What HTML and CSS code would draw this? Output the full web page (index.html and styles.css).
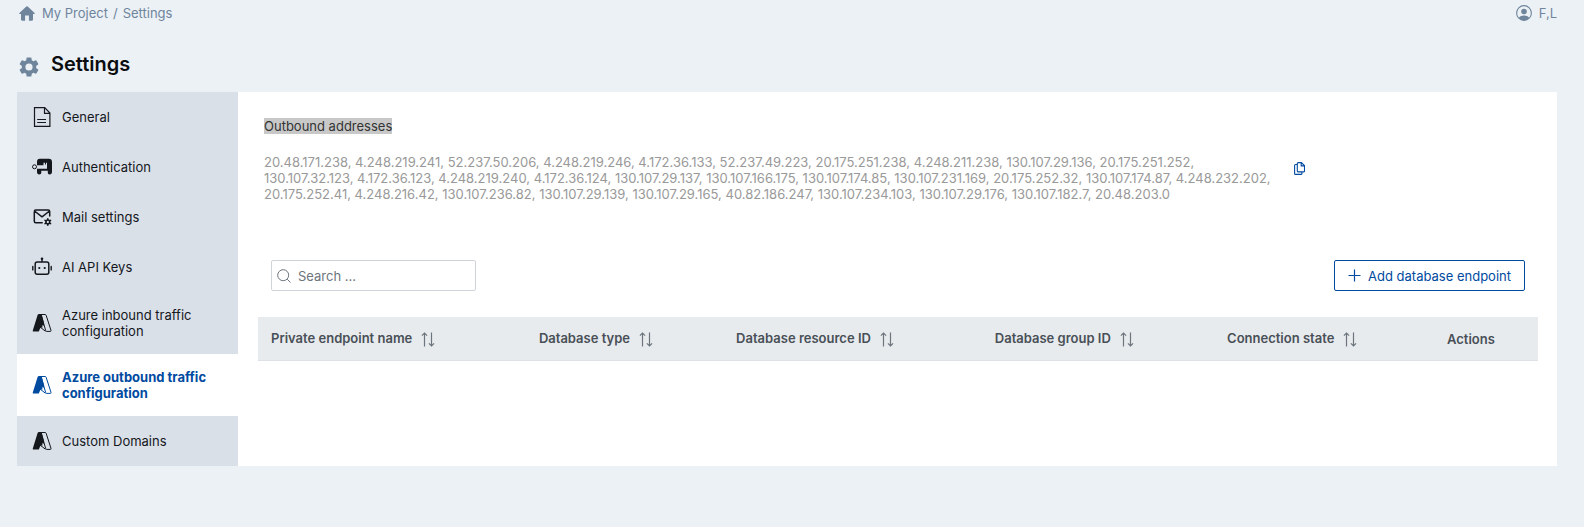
FILE: index.html
```html
<!DOCTYPE html>
<html lang="en">
<head>
  <meta charset="UTF-8" />
  <meta name="viewport" content="width=device-width, initial-scale=1" />
  <title>Settings - My Project</title>
  <link rel="stylesheet" href="styles.css">
</head>
<body>

  <!-- shared icon shapes -->
  <svg class="sprite" aria-hidden="true">
    <symbol id="icon-azure" viewBox="0 0 20 20">
      <path fill="currentColor" d="M6.600 1.300h2.900l2.300 8.200.3 3-2.300.1 1 1.700-2.400.4-1.600 3.800H1.500c-.6 0-.9-.4-.7-1L5.600 2c.2-.5.500-.7 1-.7z"/>
      <path fill="none" stroke="currentColor" stroke-linejoin="round" d="M6.500 1.500h6.600c.5 0 .8.200 1 .7l4.900 15.200c.2.700-.1 1-.7 1h-3.500c-.5 0-.9-.2-1.100-.7L9.200 1.700M6.500 12.800l7 5.500"/>
    </symbol>
    <symbol id="icon-sort" viewBox="0 0 14 15">
      <path fill="none" stroke="currentColor" stroke-width="1.200" d="M3.500 14.500V1.200M.9 3.600l2.600-2.500 2.600 2.500M10.500.5v13.300M7.900 11.400l2.600 2.500 2.600-2.500"/>
    </symbol>
  </svg>

  <header class="topbar">
    <nav class="breadcrumb" aria-label="Breadcrumb">
      <a href="#" aria-label="Home">
        <svg class="icon-home" viewBox="0 0 16 15" aria-hidden="true">
          <path fill="currentColor" d="M7.300.5a1 1 0 0 1 1.400 0l6.900 6.400c.5.500.3 1-.4 1H14v5.600c0 .8-.4 1.200-1.200 1.200H9.900V9.500H6.100v5.200H3.200c-.8 0-1.200-.4-1.200-1.200V7.900H.8c-.7 0-.9-.5-.4-1z"/>
        </svg>
      </a>
      <a href="#">My Project</a>
      <span>/</span>
      <a href="#">Settings</a>
    </nav>
    <button class="user" type="button">
      <svg class="icon-user" viewBox="0 0 16 16" aria-hidden="true">
        <circle cx="8" cy="8" r="7.400" fill="none" stroke="currentColor" stroke-width="1.100"/>
        <circle cx="8" cy="6.500" r="2.800" fill="currentColor"/>
        <path fill="currentColor" d="M2.800 12.900c1.200-1.700 3-2.400 5.200-2.400s4 .7 5.200 2.400A7.200 7.200 0 0 1 8 15.400a7.200 7.200 0 0 1-5.200-2.500z"/>
      </svg>
      F,L
    </button>
  </header>

  <div class="page-title">
    <svg class="icon-gear" viewBox="2 2 20 20" aria-hidden="true">
      <path fill="currentColor" d="M19.140 12.940c.040-.3.060-.610.060-.940s-.020-.640-.070-.940l2.030-1.580a.49.49 0 0 0 .120-.610l-1.920-3.320a.488.488 0 0 0-.590-.220l-2.390.960a7 7 0 0 0-1.620-.940l-.360-2.540a.484.484 0 0 0-.480-.410h-3.840c-.240 0-.430.170-.470.410l-.360 2.540c-.590.240-1.130.570-1.620.940l-2.390-.960a.49.49 0 0 0-.590.220L2.740 8.870c-.120.210-.080.470.120.610l2.030 1.580c-.050.300-.090.630-.090.940s.020.640.070.940l-2.030 1.580a.49.49 0 0 0-.120.610l1.920 3.320c.120.220.370.290.590.220l2.390-.960c.500.380 1.030.700 1.620.940l.360 2.540c.050.240.240.410.480.410h3.840c.240 0 .440-.170.470-.410l.360-2.540c.590-.240 1.130-.560 1.620-.940l2.390.960c.220.080.470 0 .590-.220l1.920-3.320a.49.49 0 0 0-.120-.610zM12 15.600a3.600 3.600 0 1 1 0-7.200 3.600 3.600 0 0 1 0 7.200z"/>
    </svg>
    <h1>Settings</h1>
  </div>

  <div class="panel">
    <nav class="sidebar" aria-label="Settings sections">
      <a class="side-item" href="#">
        <svg viewBox="0 0 20 20" fill="none" stroke="currentColor" aria-hidden="true">
          <path stroke-width="1.200" d="M2.500.7h10.200l5.200 5.300v13.400H2.500zM12.500.9v5.400h5.300M5.200 12.500h8.800M5.200 15.500h8.800"/>
        </svg>
        General
      </a>
      <a class="side-item" href="#">
        <svg viewBox="0 0 20 20" aria-hidden="true">
          <path fill="currentColor" d="M7.700 1.800h9.200c1.900 0 3.100 1.200 3.100 3.100v9.700c0 1.800-.8 2.900-2.300 2.900-1.300 0-1.900-.8-1.900-2v-1.700H9.300v1.700c0 1.200-.8 2-2.100 2-1.400 0-2.200-1-2.200-2.500v-3.200h10V5.800h-1v1.700h-1V5.800h-1.500v2.400H5V5c0-2 1-3.200 2.700-3.200z"/>
          <circle cx="2.500" cy="9.800" r="2" fill="none" stroke="currentColor"/>
        </svg>
        Authentication
      </a>
      <a class="side-item" href="#">
        <svg viewBox="0 0 20 20" fill="none" stroke="currentColor" stroke-width="1.500" stroke-linecap="round" stroke-linejoin="round" aria-hidden="true">
          <path d="M17.700 9V4.500c0-.9-.5-1.500-1.500-1.500H3.800c-1 0-1.500.6-1.500 1.500v9.700c0 1 .5 1.500 1.500 1.500h6.400M2.500 4l7.500 5.800L17.500 4"/>
          <circle cx="15.800" cy="15" r="1.900"/>
          <path d="M15.800 12.800v-1M15.800 18.200v-1M13.900 13.900l-.9-.5M18.600 16.600l-.9-.5M13.900 16.100l-.9.5M18.600 13.400l-.9.5"/>
        </svg>
        Mail settings
      </a>
      <a class="side-item" href="#">
        <svg viewBox="0 0 20 20" aria-hidden="true">
          <rect x="3.200" y="4.900" width="13.600" height="12.300" rx="2" fill="none" stroke="currentColor" stroke-width="1.500"/>
          <path fill="none" stroke="currentColor" stroke-width="1.400" stroke-linecap="round" d="M10 4.500V2M.8 9.500v3.400M19.200 9.500v3.400"/>
          <circle cx="10" cy="1.800" r="1.300" fill="currentColor"/>
          <circle cx="7.300" cy="11" r="1.100" fill="currentColor"/>
          <circle cx="12.700" cy="11" r="1.100" fill="currentColor"/>
        </svg>
        AI API Keys
      </a>
      <a class="side-item" href="#">
        <svg aria-hidden="true"><use href="#icon-azure"/></svg>
        Azure inbound traffic configuration
      </a>
      <a class="side-item active" href="#" aria-current="page">
        <svg aria-hidden="true"><use href="#icon-azure"/></svg>
        Azure outbound traffic configuration
      </a>
      <a class="side-item" href="#">
        <svg aria-hidden="true"><use href="#icon-azure"/></svg>
        Custom Domains
      </a>
    </nav>

    <main class="content">
      <section class="outbound">
        <div class="outbound-text">
          <h2><mark>Outbound addresses</mark></h2>
          <p>20.48.171.238, 4.248.219.241, 52.237.50.206, 4.248.219.246, 4.172.36.133, 52.237.49.223, 20.175.251.238, 4.248.211.238, 130.107.29.136, 20.175.251.252, 130.107.32.123, 4.172.36.123, 4.248.219.240, 4.172.36.124, 130.107.29.137, 130.107.166.175, 130.107.174.85, 130.107.231.169, 20.175.252.32, 130.107.174.87, 4.248.232.202, 20.175.252.41, 4.248.216.42, 130.107.236.82, 130.107.29.139, 130.107.29.165, 40.82.186.247, 130.107.234.103, 130.107.29.176, 130.107.182.7, 20.48.203.0</p>
        </div>
        <button class="btn-copy" type="button" aria-label="Copy addresses">
          <svg viewBox="0 0 11 13" fill="none" stroke="currentColor" stroke-linejoin="round" aria-hidden="true">
            <path stroke-width="1.100" d="M4.300.6h3.200l3 3v5.300c0 .6-.4 1-1 1H4.300c-.6 0-1-.4-1-1V1.600c0-.6.4-1 1-1zM7.200.8v3.100h3.100M3 2.500H1.600c-.6 0-1 .4-1 1v7.900c0 .6.4 1 1 1h5.300c.6 0 1-.4 1-1V10"/>
          </svg>
        </button>
      </section>

      <div class="toolbar">
        <label class="search">
          <svg viewBox="0 0 14 14" fill="none" stroke="currentColor" aria-hidden="true">
            <circle cx="6.200" cy="6.200" r="5.500"/>
            <path d="M10.200 10.200l3.300 3.300"/>
          </svg>
          <input type="text" placeholder="Search ..." aria-label="Search" />
        </label>
        <button class="btn-add" type="button">
          <svg viewBox="0 0 13 13" fill="none" stroke="currentColor" aria-hidden="true">
            <path stroke-width="1.200" d="M6.500.5v12M.5 6.500h12"/>
          </svg>
          Add database endpoint
        </button>
      </div>

      <table class="endpoints">
        <thead>
          <tr>
            <th>Private endpoint name<svg aria-hidden="true"><use href="#icon-sort"/></svg></th>
            <th>Database type<svg aria-hidden="true"><use href="#icon-sort"/></svg></th>
            <th>Database resource ID<svg aria-hidden="true"><use href="#icon-sort"/></svg></th>
            <th>Database group ID<svg aria-hidden="true"><use href="#icon-sort"/></svg></th>
            <th>Connection state<svg aria-hidden="true"><use href="#icon-sort"/></svg></th>
            <th>Actions</th>
          </tr>
        </thead>
        <tbody></tbody>
      </table>
    </main>
  </div>

</body>
</html>
```
FILE: styles.css
```css
* {
  box-sizing: border-box;
  margin: 0;
  padding: 0;
}

body {
  min-height: 100vh;
  padding: 0 27px 24px 17px;
  font-family: Inter, "Liberation Sans", sans-serif;
  font-size: 13px;
  line-height: 16px;
  background: #ecf1f6;
  color: #14171c;
}

a {
  color: inherit;
  text-decoration: none;
}

button,
input {
  font: inherit;
}

button {
  border: none;
  background: transparent;
  cursor: pointer;
}

svg {
  flex-shrink: 0;
}

.sprite {
  display: none;
}

.topbar {
  display: flex;
  justify-content: space-between;
  align-items: center;
  height: 26px;
  color: #6f859c;
}

.breadcrumb {
  display: flex;
  align-items: center;
  gap: 5px;
  padding-left: 2px;
}

.icon-home {
  display: block;
  width: 16px;
  height: 15px;
  margin-right: 2px;
}

.user {
  display: flex;
  align-items: center;
  gap: 7px;
  color: inherit;
}

.icon-user {
  width: 16px;
  height: 16px;
}

.page-title {
  display: flex;
  align-items: flex-end;
  gap: 12px;
  padding: 25px 0 15px 2px;
}

.page-title h1 {
  font-size: 20px;
  font-weight: 600;
  line-height: 26px;
  color: #0b0d10;
}

.icon-gear {
  width: 20px;
  height: 20px;
  color: #6f859c;
}

.panel {
  display: flex;
  background: #fff;
}

.sidebar {
  flex: 0 0 221px;
  background: #dae0e8;
}

.side-item {
  display: flex;
  align-items: center;
  gap: 10px;
  padding: 15px 20px 15px 15px;
}

.side-item svg {
  width: 20px;
  height: 20px;
}

.side-item.active {
  background: #fff;
  color: #004a9f;
  font-weight: 700;
}

.content {
  flex: 1;
  min-width: 0;
  padding: 26px 19px 20px 20px;
}

.outbound {
  display: flex;
  align-items: center;
}

.outbound-text {
  flex: 0 0 80%;
  padding: 0 6px;
}

.outbound h2 {
  margin-bottom: 20px;
  font-size: 13px;
  font-weight: 400;
}

.outbound mark {
  background: #c8c8c8;
  color: #333;
}

.outbound p {
  color: #999;
}

.btn-copy {
  padding: 16px 12px 0;
  color: #004a9f;
}

.btn-copy svg {
  display: block;
  width: 11px;
  height: 13px;
}

.toolbar {
  display: flex;
  justify-content: space-between;
  padding: 58px 13px 26px;
}

.search {
  display: flex;
  align-items: center;
  gap: 7px;
  width: 205px;
  height: 31px;
  padding: 0 5px;
  border: 1px solid #ced4da;
  border-radius: 2px;
  color: #6c757d;
}

.search svg {
  width: 14px;
  height: 14px;
}

.search input {
  flex: 1;
  min-width: 0;
  border: none;
  outline: none;
  background: transparent;
  color: #495057;
}

.search input::placeholder {
  color: #6c757d;
}

.btn-add {
  display: flex;
  align-items: center;
  gap: 7px;
  height: 31px;
  padding: 0 13px;
  border: 1px solid #004a9f;
  border-radius: 2px;
  color: #004a9f;
}

.btn-add svg {
  width: 13px;
  height: 13px;
}

.endpoints {
  width: 100%;
  border-collapse: separate;
  border-spacing: 0;
}

.endpoints th {
  height: 44px;
  padding: 0 13px;
  border-bottom: 1px solid #dee2e6;
  background: #e8ebee;
  color: #495057;
  font-weight: 600;
  text-align: left;
  white-space: nowrap;
}

.endpoints th svg {
  width: 14px;
  height: 15px;
  margin-left: 9px;
  color: #6c757d;
  vertical-align: -4px;
}
```
